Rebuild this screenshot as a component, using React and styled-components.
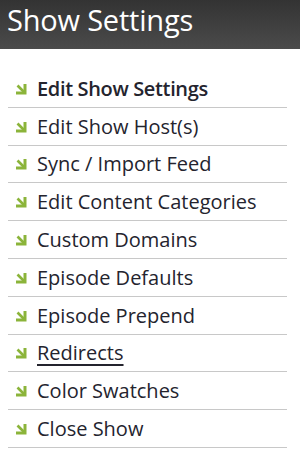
import React from "react";
import styled, { createGlobalStyle } from "styled-components";

const Global = createGlobalStyle`
  html, body { margin: 0; padding: 0; background: #fff; }
  body { font-family: "Open Sans", "Noto Sans", sans-serif; }
`;

const Page = styled.div`
  width: 300px;
  height: 465px;
  background: #fff;
`;

const Header = styled.h1`
  margin: 0;
  height: 49px;
  box-sizing: border-box;
  padding: 0 0 0 7px;
  background: linear-gradient(to bottom, #333333, #4b4b4b);
  color: #fff;
  font-size: 29px;
  font-weight: 400;
  line-height: 40px;
  letter-spacing: -0.2px;
`;

const Menu = styled.ul`
  list-style: none;
  margin: 0;
  padding: 21px 13px 0 8px;
`;

const Item = styled.li`
  display: flex;
  align-items: center;
  gap: 10px;
  height: 37.8px;
  box-sizing: border-box;
  padding-left: 8px;
  border-bottom: 1px solid #c8c8c8;
`;

const Label = styled.a`
  color: #24242e;
  font-size: 20px;
  font-weight: ${(p) => (p.$active ? 600 : 400)};
  letter-spacing: ${(p) => (p.$active ? "-0.35px" : "0")};
  text-decoration: ${(p) => (p.$underline ? "underline" : "none")};
  text-underline-offset: 4px;
  text-decoration-thickness: 2px;
`;

const Arrow = () => (
  <svg width="11" height="11" viewBox="0 0 11 11" style={{ flexShrink: 0, marginTop: 2 }}>
    <path d="M1.5 1.5 L8 8" stroke="#8bb43a" strokeWidth="2.6" />
    <path d="M0 10.5 H10.5 V0 L7.5 0 V7.5 H0 Z" fill="#8bb43a" />
  </svg>
);

const items = [
  { label: "Edit Show Settings", active: true },
  { label: "Edit Show Host(s)" },
  { label: "Sync / Import Feed" },
  { label: "Edit Content Categories" },
  { label: "Custom Domains" },
  { label: "Episode Defaults" },
  { label: "Episode Prepend" },
  { label: "Redirects", underline: true },
  { label: "Color Swatches" },
  { label: "Close Show" },
];

export default function App() {
  return (
    <Page>
      <Global />
      <Header>Show Settings</Header>
      <Menu>
        {items.map((it) => (
          <Item key={it.label}>
            <Arrow />
            <Label $active={it.active} $underline={it.underline}>
              {it.label}
            </Label>
          </Item>
        ))}
      </Menu>
    </Page>
  );
}
